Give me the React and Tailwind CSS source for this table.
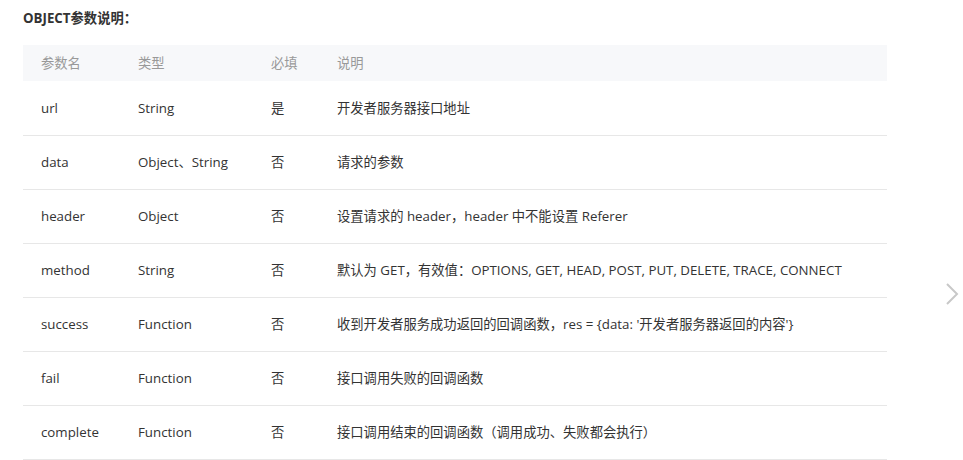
const rows = [
  ["url", "String", "是", "开发者服务器接口地址"],
  ["data", "Object、String", "否", "请求的参数"],
  ["header", "Object", "否", "设置请求的 header，header 中不能设置 Referer"],
  ["method", "String", "否", "默认为 GET，有效值：OPTIONS, GET, HEAD, POST, PUT, DELETE, TRACE, CONNECT"],
  ["success", "Function", "否", "收到开发者服务成功返回的回调函数，res = {data: '开发者服务器返回的内容'}"],
  ["fail", "Function", "否", "接口调用失败的回调函数"],
  ["complete", "Function", "否", "接口调用结束的回调函数（调用成功、失败都会执行）"],
]

export default function App() {
  return (
    <div
      className="relative w-[963px] h-[460px] overflow-hidden bg-white text-[13.3px] text-[#333]"
      style={{ fontFamily: '"Open Sans", "Noto Sans CJK SC", sans-serif' }}
    >
      <div className="px-[23px] pt-[9px]">
        <p className="font-bold leading-[18px] text-[#333]">OBJECT参数说明：</p>
        <table className="mt-[18px] w-[864px] table-fixed border-collapse">
          <colgroup>
            <col className="w-[97px]" />
            <col className="w-[133px]" />
            <col className="w-[66px]" />
            <col />
          </colgroup>
          <thead>
            <tr className="h-[36px] bg-[#f7f8fa] text-[#999]">
              <th className="pl-[18px] pt-[1px] text-left font-normal">参数名</th>
              <th className="pl-[18px] pt-[1px] text-left font-normal">类型</th>
              <th className="pl-[18px] pt-[1px] text-left font-normal">必填</th>
              <th className="pl-[18px] pt-[1px] text-left font-normal">说明</th>
            </tr>
          </thead>
          <tbody>
            {rows.map((r) => (
              <tr key={r[0]} className="h-[54px] border-b border-[#e7e7e7]">
                {r.map((c, i) => (
                  <td key={i} className="pl-[18px] pt-[2px] whitespace-nowrap">
                    {c}
                  </td>
                ))}
              </tr>
            ))}
          </tbody>
        </table>
      </div>
      <svg
        className="absolute left-[944px] top-[283px]"
        width="16"
        height="22"
        viewBox="0 0 16 22"
        fill="none"
        stroke="#c8c8c8"
        strokeWidth="2"
      >
        <path d="M3 1 L13 11 L3 21" />
      </svg>
    </div>
  )
}
